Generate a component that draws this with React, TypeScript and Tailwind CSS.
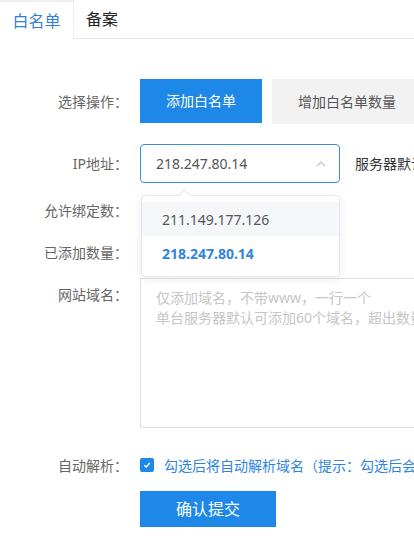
import React from 'react';

const font = { fontFamily: '"Noto Sans", "Noto Sans CJK SC", sans-serif' };

const Label: React.FC<{ children: React.ReactNode }> = ({ children }) => (
    <div className="w-[128px] shrink-0 text-right text-[14px] text-[#666]">{children}</div>
);

const App: React.FC = () => {
    return (
        <div className="w-[414px] h-[536px] overflow-hidden bg-white" style={font}>
            {/* tabs */}
            <div className="flex h-[39px]">
                <div className="w-[74px] border-t-2 border-r border-[#eeeeee] flex items-center justify-center text-[16px] text-[#2f7fd0]">
                    白名单
                </div>
                <div className="flex-1 border-b border-[#e6e6e6] flex items-center pl-[12px] text-[16px] text-[#222]">
                    备案
                </div>
            </div>

            <div className="flex flex-col w-[620px]">
                <div className="mt-[40px] flex items-center h-[44px]">
                    <Label>选择操作：</Label>
                    <div className="ml-[12px] flex gap-[10px]">
                        <button className="w-[122px] h-[44px] bg-[#1e88e8] text-white text-[14px]">添加白名单</button>
                        <button className="w-[150px] h-[45px] bg-[#f2f2f2] text-[#555] text-[14px]">增加白名单数量</button>
                    </div>
                </div>

                <div className="mt-[21px] flex items-center h-[39px]">
                    <Label>IP地址：</Label>
                    <div className="relative ml-[12px] w-[200px] h-[39px] rounded-[4px] border border-[#3b8fe0] flex items-center justify-between pl-[15px] pr-[12px] text-[14px] text-[#555]">
                        <span>218.247.80.14</span>
                        <svg width="12" height="12" viewBox="0 0 12 12" fill="none">
                            <path d="M2 8 L6 4 L10 8" stroke="#c0c4cc" strokeWidth="1.2" />
                        </svg>
                        {/* dropdown */}
                        <div className="absolute left-[0px] top-[50px] w-[199px] z-10 bg-white border border-[#e4e7ed] rounded-[4px] shadow-[0_2px_10px_rgba(0,0,0,0.08)] py-[6px]">
                            <div className="absolute -top-[5px] left-[38px] w-[9px] h-[9px] bg-white border-l border-t border-[#e4e7ed] rotate-45" />
                            <div className="h-[34px] flex items-center pl-[20px] bg-[#f5f7fa] text-[14px] text-[#555]">
                                211.149.177.126
                            </div>
                            <div className="h-[34px] flex items-center pl-[20px] text-[14px] font-bold text-[#2f84e0]">
                                218.247.80.14
                            </div>
                        </div>
                    </div>
                    <div className="ml-[15px] text-[14px] text-[#333] whitespace-nowrap">服务器默认可绑定2个IP</div>
                </div>

                <div className="mt-[7px] flex items-center h-[40px]">
                    <Label>允许绑定数：</Label>
                </div>

                <div className="mt-[2px] flex items-center h-[40px]">
                    <Label>已添加数量：</Label>
                </div>

                <div className="mt-[6px] flex items-start">
                    <div className="w-[128px] shrink-0 h-[32px] flex items-center justify-end text-[14px] text-[#666]">网站域名：</div>
                    <textarea
                        className="ml-[12px] w-[440px] h-[150px] border border-[#e2e2e2] px-[15px] py-[9px] text-[14px] leading-[20px] resize-none outline-none placeholder:text-[#c6c6c6]"
                        placeholder={'仅添加域名，不带www，一行一个\n单台服务器默认可添加60个域名，超出数量需增加白名单数量'}
                    />
                </div>

                <div className="mt-[21px] flex items-center h-[32px]">
                    <Label>自动解析：</Label>
                    <div className="ml-[12px] flex items-center">
                        <span className="w-[14px] h-[14px] rounded-[2px] bg-[#1e88e8] flex items-center justify-center">
                            <svg width="10" height="10" viewBox="0 0 10 10" fill="none">
                                <path d="M2.2 5.2 L4.2 7 L7.8 3" stroke="white" strokeWidth="1.4" />
                            </svg>
                        </span>
                        <span className="ml-[10px] text-[14px] text-[#2f84e0] whitespace-nowrap">
                            勾选后将自动解析域名（提示：勾选后会自动添加解析记录）
                        </span>
                    </div>
                </div>

                <div className="mt-[10px] flex">
                    <div className="w-[128px] shrink-0" />
                    <button className="ml-[12px] w-[136px] h-[36px] bg-[#1e88e8] text-white text-[16px]">确认提交</button>
                </div>
            </div>
        </div>
    );
};

export default App;
